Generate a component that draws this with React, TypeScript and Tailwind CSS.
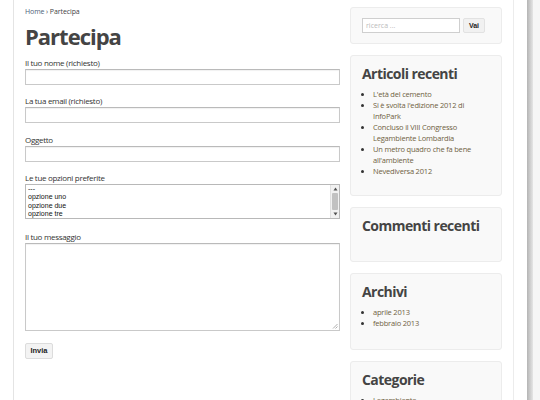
import React from "react";

const linkColor = "text-[#6f6142]";

function Widget({ title, children, className = "" }: { title?: string; children?: React.ReactNode; className?: string }) {
  return (
    <div className={`shrink-0 bg-[#f9f9f9] border border-[#ececec] rounded-[3px] px-[11px] ${className}`}>
      {title && (
        <h3 className="text-[14px] leading-[20px] font-bold text-[#444] pt-[8px] tracking-[-0.55px] whitespace-nowrap">
          {title}
        </h3>
      )}
      {children}
    </div>
  );
}

function Field({ label, children, mb }: { label: string; children: React.ReactNode; mb: string }) {
  return (
    <div className={mb}>
      <div className="text-[8px] leading-[12px] h-[12px] text-[#333] tracking-[-0.3px]">{label}</div>
      {children}
    </div>
  );
}

const inputCls =
  "block w-[315px] h-[16px] bg-white border border-[#c9c9c9] border-t-[#bababa] shadow-[inset_0_1px_1px_rgba(0,0,0,0.06)]";

const listCls = `list-disc pl-[11px] mt-[5px] text-[7.5px] tracking-[-0.2px] ${linkColor} marker:text-[#333]`;

export default function App() {
  return (
    <div className="w-[540px] h-[400px] overflow-hidden bg-white flex font-['Open_Sans',sans-serif]">
      <div className="w-[14px] shrink-0 border-r border-[#e4e4e4]" />
      <div className="w-[513px] shrink-0 flex items-start">
        {/* main */}
        <div className="w-[336px] shrink-0 pl-[11px] pt-[6px]">
          <div className="text-[7px] leading-[12px] text-[#444] tracking-[-0.1px]">
            <span className="text-[#4d6178]">Home</span> › Partecipa
          </div>
          <h1 className="text-[22px] leading-[30px] font-bold text-[#444] mt-[3px] mb-[6px] tracking-[-1px]">Partecipa</h1>
          <Field label="Il tuo nome (richiesto)" mb="mb-[10px]">
            <div className={inputCls} />
          </Field>
          <Field label="La tua email (richiesto)" mb="mb-[11px]">
            <div className={inputCls} />
          </Field>
          <Field label="Oggetto" mb="mb-[10px]">
            <div className={inputCls} />
          </Field>
          <Field label="Le tue opzioni preferite" mb="mb-[12px]">
            <div className="w-[315px] h-[35px] bg-white border border-[#b8b8b8] flex font-['Liberation_Sans',sans-serif] text-[7px] leading-[8.4px] text-[#111]">
              <div className="flex-1 pl-[2px] overflow-hidden">
                <div>---</div>
                <div>opzione uno</div>
                <div>opzione due</div>
                <div>opzione tre</div>
              </div>
              <div className="w-[9px] h-full flex flex-col bg-[#f1f1f1] border-l border-[#e0e0e0]">
                <div className="h-[8px] flex items-center justify-center">
                  <svg width="5" height="4" viewBox="0 0 5 4"><path d="M2.5 0.5L4.5 3.5H0.5Z" fill="#505050" /></svg>
                </div>
                <div className="flex-1 mx-[1px] bg-[#c1c1c1] rounded-[1px]" />
                <div className="h-[8px] flex items-center justify-center">
                  <svg width="5" height="4" viewBox="0 0 5 4"><path d="M2.5 3.5L4.5 0.5H0.5Z" fill="#505050" /></svg>
                </div>
              </div>
            </div>
          </Field>
          <Field label="Il tuo messaggio" mb="mb-[12px]">
            <div className="relative w-[315px] h-[88px] bg-white border border-[#c9c9c9] border-t-[#bababa] shadow-[inset_0_1px_1px_rgba(0,0,0,0.06)]">
              <svg className="absolute right-[1px] bottom-[1px]" width="6" height="6" viewBox="0 0 6 6">
                <path d="M5.5 1L1 5.5M5.5 3.5L3.5 5.5" stroke="#999" strokeWidth="0.8" />
              </svg>
            </div>
          </Field>
          <div className="flex">
            <div className="h-[16px] w-[28px] bg-[#f3f3f3] border border-[#dcdcdc] rounded-[2px] text-[7.5px] font-bold text-[#222] leading-[14px] text-center font-['Liberation_Sans',sans-serif]">
              Invia
            </div>
          </div>
        </div>
        {/* sidebar */}
        <div className="w-[152px] shrink-0 pt-[7px] flex flex-col gap-[11px]">
          <Widget className="h-[37px] flex items-center gap-[3px]">
            <div className="w-[98px] h-[15px] bg-white border border-[#cfcfcf] text-[7px] leading-[13px] pl-[3px] text-[#bbb]">
              ricerca ...
            </div>
            <div className="w-[22px] h-[15px] bg-[#f1f1f1] border border-[#e2e2e2] rounded-[2px] text-[7px] leading-[13px] font-bold text-center text-[#222] font-['Liberation_Sans',sans-serif]">
              Vai
            </div>
          </Widget>
          <Widget title="Articoli recenti" className="pb-[18px]">
            <ul className={`${listCls} leading-[11px]`}>
              <li>L'età del cemento</li>
              <li>Si è svolta l'edizione 2012 di InfoPark</li>
              <li>Concluso il VIII Congresso Legambiente Lombardia</li>
              <li>Un metro quadro che fa bene all'ambiente</li>
              <li>Nevediversa 2012</li>
            </ul>
          </Widget>
          <Widget title="Commenti recenti" className="h-[55px]" />
          <Widget title="Archivi" className="pb-[21px]">
            <ul className={`${listCls} leading-[10.5px]`}>
              <li>aprile 2013</li>
              <li>febbraio 2013</li>
            </ul>
          </Widget>
          <Widget title="Categorie" className="pb-[21px]">
            <ul className={`${listCls} leading-[11px]`}>
              <li>Legambiente</li>
              <li>Notizie</li>
            </ul>
          </Widget>
        </div>
        <div className="w-[11px] shrink-0" />
        <div className="w-[14px] h-[400px] shrink-0 border-l border-[#ececec]" />
      </div>
      <div className="w-[6px] shrink-0 bg-gradient-to-r from-[#b4b4b4] to-[#e6e6e6]" />
      <div className="flex-1 bg-[#f6f6f6]" />
    </div>
  );
}
